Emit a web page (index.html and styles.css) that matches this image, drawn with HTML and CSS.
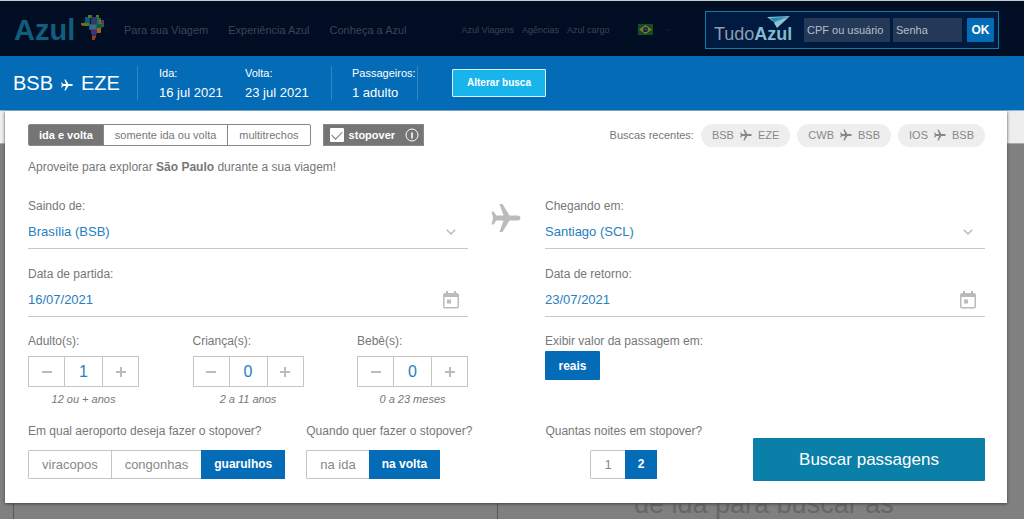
FILE: index.html
```html
<!DOCTYPE html>
<html lang="pt-BR">
<head>
<meta charset="utf-8">
<title>Azul - Buscar passagens</title>
<link rel="stylesheet" href="styles.css">
</head>
<body>
<svg class="sprite" aria-hidden="true">
  <symbol id="plane" viewBox="0 0 30 30"><path d="M27 12.500H18.500L11.500 1H8.500L12.500 12.500H5.500L2.500 8.500H.5L2 15L.5 21.500H2.500L5.500 17.500H12.500L8.500 29H11.500L18.500 17.500H27Q29.500 17.200 29.500 15Q29.500 12.800 27 12.500Z"/></symbol>
  <symbol id="chevron" viewBox="0 0 10 6"><path d="M.8 .8L5 5L9.200 .8" fill="none" stroke="currentColor" stroke-width="1.500"/></symbol>
  <symbol id="calendar" viewBox="0 0 16 18"><path d="M2 2H3V0H5V2H11V0H13V2H14Q16 2 16 4V15.500Q16 17.500 14 17.500H2Q0 17.500 0 15.500V4Q0 2 2 2ZM1.500 6V16H14.500V6ZM4 8.500H8V12.500H4Z" fill-rule="evenodd"/></symbol>
</svg>

<header class="header">
  <a class="brand" href="#" aria-label="Azul">
    <span class="brand-name">Azul</span>
    <svg class="brand-map" viewBox="0 0 24 26" aria-hidden="true">
      <path fill="#075b78" d="M4 2h5v8H3V7h1z"/><path fill="#5d7415" d="M7 0h4v3H7zM15 0h3v4h-3zM1 8h7v3H1z"/>
      <path fill="#303a68" d="M10 2h6v7h-6z"/><path fill="#0b7867" d="M16 3h4v6h-4z"/><path fill="#7a6a12" d="M0 8h4v2H0zM18 5h3v4h-3z"/>
      <path fill="#792b50" d="M20 5h3v3h-3z"/><path fill="#14607a" d="M21 8h2v4h-2zM8 9h8v6H8z"/><path fill="#416b78" d="M9 10h6v4H9z"/>
      <path fill="#185b3c" d="M16 9h5v4h-5z"/><path fill="#5c2670" d="M10 15h6v4h-6z"/><path fill="#98661a" d="M16 13h4v5h-4z"/>
      <path fill="#1c407b" d="M11 18h4v3h-4z"/><path fill="#9a3a22" d="M11 21h4v2h-1v2h-3z"/>
    </svg>
  </a>
  <nav class="nav">
    <a href="#">Para sua Viagem</a>
    <a href="#">Experiência Azul</a>
    <a href="#">Conheça a Azul</a>
  </nav>
  <nav class="subnav">
    <a href="#">Azul Viagens</a>
    <a href="#">Agências</a>
    <a href="#">Azul cargo</a>
  </nav>
  <button class="language" type="button" aria-label="Português">
    <svg class="flag" viewBox="0 0 15 11"><path fill="#104d24" d="M0 0h15v11H0z"/><path fill="#7f7c16" d="M7.500 1L14 5.500L7.500 10L1 5.500z"/><circle cx="7.500" cy="5.500" r="2.600" fill="#101f59"/><path d="M5.200 5Q8 4.500 9.800 6.500" stroke="#66718a" stroke-width=".6" fill="none"/></svg>
    <svg class="language-arrow"><use href="#chevron"/></svg>
  </button>
  <form class="login">
    <div class="tudo" aria-label="TudoAzul">
      <svg class="tudo-kite" viewBox="0 0 23 12" aria-hidden="true"><path fill="#82bccd" d="M0 1L23 0L8 7z"/><path fill="#238cbb" d="M3 2L20 1L7 6z"/><path fill="#8cc5d4" d="M23 0L10 12L7 7z"/></svg>
      <span class="tudo-text">Tudo<b>Azul</b></span>
    </div>
    <input class="login-input login-user" type="text" placeholder="CPF ou usuário" aria-label="CPF ou usuário">
    <input class="login-input login-pass" type="password" placeholder="Senha" aria-label="Senha">
    <button class="login-ok" type="button">OK</button>
  </form>
</header>

<section class="summary">
  <h1 class="route">BSB <svg class="route-plane"><use href="#plane"/></svg> EZE</h1>
  <dl class="trip">
    <div class="trip-item trip-out"><dt>Ida:</dt><dd>16 jul 2021</dd></div>
    <div class="trip-item trip-back"><dt>Volta:</dt><dd>23 jul 2021</dd></div>
    <div class="trip-item trip-people"><dt>Passageiros:</dt><dd>1 adulto</dd></div>
  </dl>
  <button class="change" type="button">Alterar busca</button>
</section>

<main class="results">
  <div class="results-strip"></div>
  <div class="results-body">
    <div class="results-column"></div>
    <div class="results-column results-message">de ida para buscar as</div>
  </div>

  <form class="modal">
    <div class="top-row">
      <div class="segments trip-type" role="radiogroup" aria-label="Tipo de viagem">
        <label><input type="radio" name="tipo" checked><span>ida e volta</span></label>
        <label><input type="radio" name="tipo"><span>somente ida ou volta</span></label>
        <label><input type="radio" name="tipo"><span>multitrechos</span></label>
      </div>
      <div class="stopover">
        <input class="stopover-check" type="checkbox" id="stopover" checked>
        <label for="stopover">stopover</label>
        <svg class="info" viewBox="0 0 14 14" aria-hidden="true"><circle cx="7" cy="7" r="6" fill="none" stroke="#fff"/><path d="M6.200 4.500H7.800V10.500H6.200z" fill="#fff"/></svg>
      </div>
      <div class="recent">
        <span>Buscas recentes:</span>
        <button type="button">BSB <svg><use href="#plane"/></svg> EZE</button>
        <button type="button">CWB <svg><use href="#plane"/></svg> BSB</button>
        <button type="button">IOS <svg><use href="#plane"/></svg> BSB</button>
      </div>
    </div>

    <p class="hint">Aproveite para explorar <b>São Paulo</b> durante a sua viagem!</p>

    <div class="route-fields">
      <div class="field">
        <label for="origem">Saindo de:</label>
        <div class="control"><select id="origem"><option>Brasília (BSB)</option></select><svg class="arrow"><use href="#chevron"/></svg></div>
      </div>
      <svg class="middle-plane" aria-hidden="true"><use href="#plane"/></svg>
      <div class="field">
        <label for="destino">Chegando em:</label>
        <div class="control"><select id="destino"><option>Santiago (SCL)</option></select><svg class="arrow"><use href="#chevron"/></svg></div>
      </div>
      <div class="field field-start">
        <label for="partida">Data de partida:</label>
        <div class="control"><input id="partida" type="text" value="16/07/2021"><svg class="date-icon"><use href="#calendar"/></svg></div>
      </div>
      <div class="field field-end">
        <label for="retorno">Data de retorno:</label>
        <div class="control"><input id="retorno" type="text" value="23/07/2021"><svg class="date-icon"><use href="#calendar"/></svg></div>
      </div>
    </div>

    <div class="people-row">
      <div class="counters">
        <div class="counter">
          <label for="adultos">Adulto(s):</label>
          <div class="stepper"><button type="button" aria-label="Menos adultos"><svg><path d="M0 5H10"/></svg></button><input id="adultos" type="text" value="1"><button type="button" aria-label="Mais adultos"><svg><path d="M0 5H10M5 0V10"/></svg></button></div>
          <em>12 ou + anos</em>
        </div>
        <div class="counter">
          <label for="criancas">Criança(s):</label>
          <div class="stepper"><button type="button" aria-label="Menos crianças"><svg><path d="M0 5H10"/></svg></button><input id="criancas" type="text" value="0"><button type="button" aria-label="Mais crianças"><svg><path d="M0 5H10M5 0V10"/></svg></button></div>
          <em>2 a 11 anos</em>
        </div>
        <div class="counter">
          <label for="bebes">Bebê(s):</label>
          <div class="stepper"><button type="button" aria-label="Menos bebês"><svg><path d="M0 5H10"/></svg></button><input id="bebes" type="text" value="0"><button type="button" aria-label="Mais bebês"><svg><path d="M0 5H10M5 0V10"/></svg></button></div>
          <em>0 a 23 meses</em>
        </div>
      </div>
      <div class="currency">
        <span class="group-title">Exibir valor da passagem em:</span>
        <button type="button">reais</button>
      </div>
    </div>

    <div class="stop-row">
      <div class="question">
        <span class="group-title">Em qual aeroporto deseja fazer o stopover?</span>
        <div class="segments options" role="radiogroup" aria-label="Aeroporto do stopover">
          <label><input type="radio" name="aeroporto"><span>viracopos</span></label>
          <label><input type="radio" name="aeroporto"><span>congonhas</span></label>
          <label><input type="radio" name="aeroporto" checked><span>guarulhos</span></label>
        </div>
      </div>
      <div class="question">
        <span class="group-title">Quando quer fazer o stopover?</span>
        <div class="segments options" role="radiogroup" aria-label="Quando fazer o stopover">
          <label><input type="radio" name="quando"><span>na ida</span></label>
          <label><input type="radio" name="quando" checked><span>na volta</span></label>
        </div>
      </div>
      <div class="question nights">
        <span class="group-title">Quantas noites em stopover?</span>
        <div class="segments options" role="radiogroup" aria-label="Noites em stopover">
          <label><input type="radio" name="noites"><span>1</span></label>
          <label><input type="radio" name="noites" checked><span>2</span></label>
        </div>
      </div>
      <button class="search" type="submit">Buscar passagens</button>
    </div>
  </form>
</main>
</body>
</html>
```

FILE: styles.css
```css
* { box-sizing: border-box; }
body {
  margin: 0;
  min-height: 100vh;
  display: flex;
  flex-direction: column;
  font: 12px/18px "Liberation Sans", Arial, sans-serif;
  color: #777;
  background: #808080;
  overflow: hidden;
}
button, input, select { font: inherit; color: inherit; border: 0; margin: 0; padding: 0; background: none; border-radius: 0; }
button { cursor: pointer; }
a { color: inherit; text-decoration: none; }
.sprite { display: none; }

/* Header */
.header {
  height: 56px;
  flex: none;
  display: flex;
  align-items: center;
  padding: 2px 25px 0 14px;
  background: #000d22;
  border-top: 1px solid #c4cbd0;
  color: #3b4554;
}
.brand { display: flex; align-items: center; width: 110px; gap: 6px; color: #105d7c; }
.brand-name { font-size: 29px; line-height: 30px; font-weight: bold; }
.brand-map { width: 24px; height: 26px; margin-bottom: 4px; }
.nav { display: flex; gap: 20px; font-size: 11px; }
.subnav { display: flex; gap: 8px; margin-left: 55px; font-size: 9px; }
.language { display: flex; align-items: center; gap: 12px; margin-left: 28px; color: #1d2938; }
.flag { width: 15px; height: 11px; }
.language-arrow { width: 5px; height: 4px; }
.login {
  display: flex;
  align-items: center;
  width: 294px;
  height: 38px;
  margin-left: auto;
  padding: 0 4px 0 8px;
  background: #001a40;
  border: 1px solid #0880ae;
}
.tudo { width: 76px; margin-right: 14px; color: #909bb0; display: flex; flex-direction: column; }
.tudo-kite { width: 23px; height: 12px; align-self: flex-end; }
.tudo-text { font-size: 18px; line-height: 18px; margin-top: -3px; }
.tudo-text b { color: #82bccd; }
.login-input { height: 24px; background: #243958; color: #b6bfcb; font-size: 11px; padding: 0 3px; }
.login-input::placeholder { color: #b6bfcb; opacity: 1; }
.login-user { width: 86px; margin-right: 3px; }
.login-pass { width: 69px; margin-right: 5px; }
.login-ok { width: 27px; height: 24px; border-radius: 1px; background: #046bb6; color: #fff; font-size: 12px; font-weight: bold; }

/* Trip summary */
.summary {
  flex: none;
  display: flex;
  align-items: center;
  height: 55px;
  padding: 0 13px;
  background: #046bb6;
  border-bottom: 1px solid #83b8df;
  color: #fff;
}
.route { display: flex; align-items: center; gap: 8px; margin: 0; width: 125px; font-size: 20px; line-height: 34px; font-weight: normal; border-right: 1px solid #3186c4; }
.route-plane { width: 12px; height: 12px; margin-top: 4px; fill: #fff; }
.trip { display: flex; margin: 0; }
.trip-item { height: 34px; }
.trip-out { width: 107px; padding-left: 21px; }
.trip-back { width: 86px; }
.trip-people { width: 87px; padding-left: 20px; border-left: 1px solid #3186c4; border-right: 1px solid #3186c4; }
.trip dt { font-size: 11px; line-height: 14px; }
.trip dd { margin: 4px 0 0; font-size: 13px; line-height: 18px; }
.change { width: 94px; height: 28px; margin-left: 34px; background: #18b5ed; border: 1px solid #d9f2fc; border-radius: 1px; font-size: 10px; font-weight: bold; }

/* Results page below the search panel */
.results { flex: 1; position: relative; display: flex; flex-direction: column; }
.results-strip { height: 33px; background: #eee; border-bottom: 1px solid #aaa; }
.results-body { flex: 1; display: flex; padding-left: 13px; background: #808080; }
.results-column { width: 484px; border-left: 1px solid #555; }
.results-message { flex: 1; display: flex; align-items: flex-end; padding-left: 136px; font-size: 27px; line-height: 30px; color: #666; }

/* Search panel */
.modal {
  position: absolute;
  inset: 0 17px auto 5px;
  padding: 13px 22px 24px 23px;
  background: #fff;
  box-shadow: 0 1px 3px #444;
}
.top-row { display: flex; align-items: center; height: 22px; }
.segments { display: flex; }
.segments input { position: absolute; opacity: 0; }
.segments span { display: block; text-align: center; }
.trip-type { font-size: 11px; border: 1px solid #888; border-radius: 2px; line-height: 20px; }
.trip-type label + label { border-left: 1px solid #888; }
.trip-type span { padding: 0 11px; }
.trip-type input:checked + span { padding: 0 10px; background: #757575; color: #fff; font-weight: bold; }
.stopover { display: flex; align-items: center; width: 101px; height: 22px; margin-left: 12px; padding: 0 4px 0 6px; background: #757575; border: 1px solid #888; color: #fff; font-size: 11px; font-weight: bold; }
.stopover label { margin: 0 auto 0 5px; }
.stopover-check { appearance: none; width: 14px; height: 14px; border-radius: 1px; background: #fff; display: grid; place-items: center; }
.stopover-check:checked::before { content: ""; width: 9px; height: 5px; margin-bottom: 3px; border: solid #777; border-width: 0 0 1px 1px; transform: rotate(-45deg); }
.info { width: 14px; height: 14px; }
.recent { display: flex; align-items: center; gap: 7px; margin-left: auto; font-size: 11px; }
.recent button { display: flex; align-items: center; justify-content: center; gap: 6px; height: 23px; padding: 0 11px; border-radius: 12px; background: #eee; color: #888; }
.recent svg { width: 12px; height: 12px; fill: #888; }
.hint { margin: 12px 0 21px; }
.route-fields { display: grid; grid-template-columns: 1fr 77px 1fr; row-gap: 16px; }
.field label, .group-title, .counter label { display: block; }
.field-start { grid-column: 1; }
.field-end { grid-column: 3; }
.middle-plane { width: 30px; height: 30px; margin: 6px auto 0 23px; fill: #bbb; }
.control { display: flex; align-items: center; height: 34px; padding-right: 9px; border-bottom: 1px solid #c8c8c8; color: #bbb; }
.control select, .control input { flex: 1; min-width: 0; height: 32px; appearance: none; color: #2680c0; font-size: 13px; outline: 0; }
.arrow { width: 10px; height: 6px; margin-right: 3px; }
.date-icon { width: 16px; height: 18px; fill: #bbb; }
.people-row { display: grid; grid-template-columns: 1fr 1fr; column-gap: 77px; margin-top: 15px; }
.counters { display: flex; justify-content: space-between; }
.counter { width: 111px; }
.counter em { display: block; margin-top: 4px; text-align: center; font-size: 11px; line-height: 16px; }
.stepper { display: flex; height: 31px; margin-top: 6px; border: 1px solid #c5c5c5; }
.stepper button { flex: 1; display: grid; place-items: center; }
.stepper svg { width: 10px; height: 10px; stroke: #bbb; stroke-width: 2; }
.stepper input { width: 39px; text-align: center; font-size: 16px; color: #2680c0; border: solid #c5c5c5; border-width: 0 1px; }
.currency button { display: block; margin-top: 1px; width: 55px; height: 29px; border-radius: 1px; background: #046bb6; color: #fff; font-size: 12px; font-weight: bold; }
.stop-row { display: flex; margin-top: 15px; }
.question { flex: 0 0 auto; margin-right: 21px; }
.options { width: max-content; margin-top: 10px; border: 1px solid #c5c5c5; border-radius: 1px; font-size: 13px; line-height: 27px; }
.options label + label { border-left: 1px solid #c5c5c5; }
.options span { padding: 0 13px; color: #888; }
.options input:checked + span { margin: -1px; background: #046bb6; color: #fff; font-size: 12px; font-weight: bold; line-height: 29px; }
.nights { margin: 0 0 0 52px; }
.nights .options { margin-left: 45px; }
.search { width: 232px; height: 43px; margin: 16px 0 -2px auto; border-radius: 1px; background: #0a80a8; color: #fff; font-size: 17px; }
```
